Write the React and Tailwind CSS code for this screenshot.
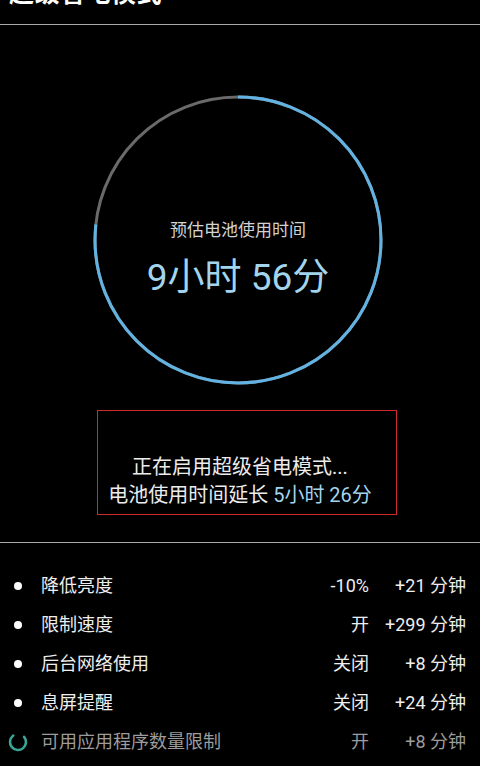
import React from 'react';

const FONT = { fontFamily: "Roboto, 'Noto Sans CJK SC', sans-serif" };

const ROWS = [
  { label: '降低亮度', value: '-10%', gain: '+21 分钟' },
  { label: '限制速度', value: '开', gain: '+299 分钟' },
  { label: '后台网络使用', value: '关闭', gain: '+8 分钟' },
  { label: '息屏提醒', value: '关闭', gain: '+24 分钟' },
  { label: '可用应用程序数量限制', value: '开', gain: '+8 分钟', pending: true },
];

const R = 143;
const C = 2 * Math.PI * R;
const USED = 0.767;

const Dial = () => (
  <div className="relative w-[292px] h-[292px] ml-[92px] mt-[69px]">
    <svg width="292" height="292" viewBox="0 0 292 292">
      <circle cx="146" cy="146" r={R} fill="none" stroke="#6a6a6a" strokeWidth="3" />
      <circle
        cx="146"
        cy="146"
        r={R}
        fill="none"
        stroke="#62b2e2"
        strokeWidth="3"
        strokeDasharray={`${C * USED} ${C}`}
        transform="rotate(-90 146 146)"
      />
    </svg>
    <div className="absolute inset-0 flex flex-col items-center pt-[124px]">
      <p className="text-[17px] leading-[24px] text-[#d2d2d2]">预估电池使用时间</p>
      <p className="mt-[14px] text-[37px] leading-[44px] text-[#a3d4ee]">9小时 56分</p>
    </div>
  </div>
);

const Spinner = () => (
  <svg width="22" height="22" viewBox="0 0 22 22">
    <circle
      cx="11"
      cy="11"
      r="8"
      fill="none"
      stroke="#3aa597"
      strokeWidth="2.6"
      strokeLinecap="round"
      strokeDasharray="38 50.3"
      transform="rotate(-40 11 11)"
    />
  </svg>
);

export default function App() {
  return (
    <div className="w-[480px] h-[766px] overflow-hidden bg-black text-white" style={FONT}>
      <div className="h-[24px] overflow-hidden">
        <p className="mt-[-19px] pl-[9px] text-[25px] leading-[25px] font-bold tracking-[0.5px]">超级省电模式</p>
      </div>
      <div className="h-[1px] bg-[#a8a8a8]" />

      <Dial />

      <div className="mt-[24px] ml-[97px] w-[300px] h-[105px] border border-[#cf2a30] flex flex-col items-center pt-[42px] pr-[14px]">
        <p className="text-[20px] leading-[28px] text-[#ececec]">正在启用超级省电模式...</p>
        <p className="text-[20px] leading-[28px] text-[#ececec]">
          电池使用时间延长 <span className="text-[#a3d4ee]">5小时 26分</span>
        </p>
      </div>

      <div className="mt-[27px] h-[1px] bg-[#a8a8a8]" />

      <div className="pt-[23px]">
        {ROWS.map((row) => (
          <div
            key={row.label}
            className={`flex items-center h-[39px] text-[18px] ${row.pending ? 'text-[#9c9c9c]' : 'text-[#eeeeee]'}`}
          >
            <div className="w-[41px] flex justify-center pr-[5px]">
              {row.pending ? <Spinner /> : <span className="w-[8px] h-[8px] rounded-full bg-white" />}
            </div>
            <span className="flex-1">{row.label}</span>
            <span className="text-right">{row.value}</span>
            <span className="w-[98px] text-right pr-[1px]">{row.gain}</span>
            <span className="w-[13px]" />
          </div>
        ))}
      </div>
    </div>
  );
}
